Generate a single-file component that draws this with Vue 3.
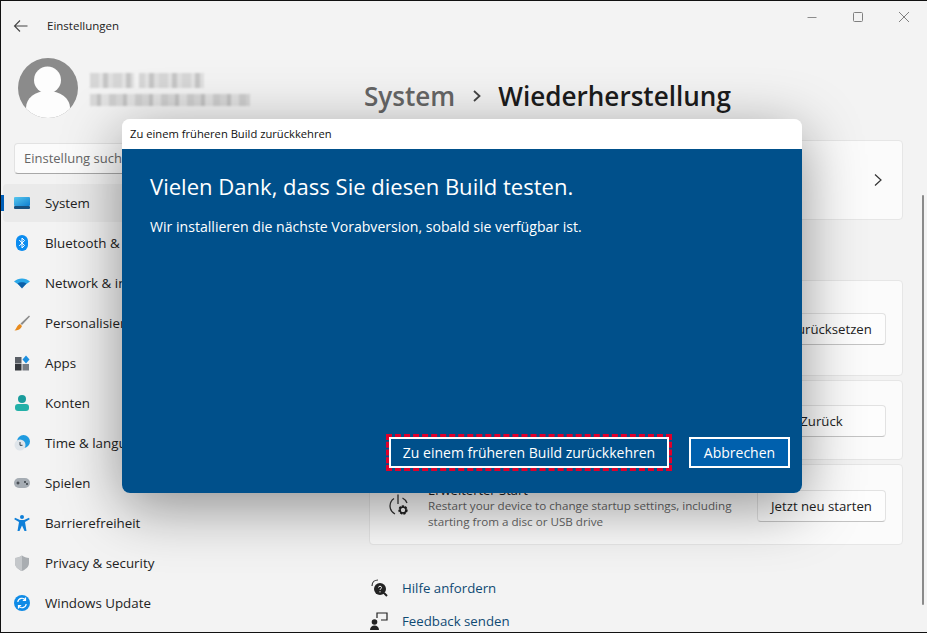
<script setup>
const navItems = [
  { id: 'system', label: 'System', active: true },
  { id: 'bt', label: 'Bluetooth & devices' },
  { id: 'net', label: 'Network & internet' },
  { id: 'brush', label: 'Personalisierung' },
  { id: 'apps', label: 'Apps' },
  { id: 'acc', label: 'Konten' },
  { id: 'time', label: 'Time & language' },
  { id: 'game', label: 'Spielen' },
  { id: 'a11y', label: 'Barrierefreiheit' },
  { id: 'shield', label: 'Privacy & security' },
  { id: 'update', label: 'Windows Update' },
]
</script>

<template>
  <div class="window">
    <aside class="sidebar">
      <div class="titlebar">
        <svg class="back" width="16" height="14" viewBox="0 0 16 14" fill="none" stroke="#444" stroke-width="1.1">
          <path d="M14.5 7H1.5M7 1.5 1.5 7 7 12.5" />
        </svg>
        <span class="apptitle">Einstellungen</span>
      </div>
      <div class="profile">
        <svg width="60" height="60" viewBox="0 0 60 60">
          <defs><clipPath id="av"><circle cx="30" cy="30" r="30" /></clipPath></defs>
          <circle cx="30" cy="30" r="30" fill="#8b8b8b" />
          <g clip-path="url(#av)">
            <circle cx="29.500" cy="22" r="13.500" fill="#fdfdfd" />
            <path d="M8 60V50C8 40 17 33 29.500 33S52 40 52 50V60Z" fill="#fdfdfd" />
          </g>
        </svg>
        <div class="identity">
          <div class="blur-name"></div>
          <div class="blur-mail"></div>
        </div>
      </div>
      <div class="search">Einstellung suchen</div>
      <nav class="nav">
        <div v-for="item in navItems" :key="item.id" class="nav-item" :class="{ active: item.active }">
          <span v-if="item.active" class="accent"></span>
          <svg class="nav-icon" width="18" height="18" viewBox="0 0 18 18">
            <template v-if="item.id === 'system'">
              <defs><linearGradient id="sys" x1="0" y1="0" x2="1" y2="1"><stop offset="0" stop-color="#57c7ee" /><stop offset="1" stop-color="#0f7fd0" /></linearGradient></defs>
              <rect x="1" y="3" width="16" height="9" rx="1" fill="url(#sys)" />
              <rect x="1" y="12" width="16" height="3" rx="1" fill="#17507f" />
            </template>
            <template v-else-if="item.id === 'bt'">
              <rect x="3" y="1" width="12" height="16" rx="6" fill="#0b8cf0" />
              <path d="M6.200 6 11.500 11.500 9 14V4L11.500 6.500 6.200 12" fill="none" stroke="#fff" stroke-width="1" />
            </template>
            <template v-else-if="item.id === 'net'">
              <path d="M1 7.500C5.500 3.500 12.500 3.500 17 7.500L9 13Z" fill="#2aa7e8" />
              <path d="M4.500 9.500C7 7.800 11 7.800 13.500 9.500L9 14.500Z" fill="#0c5fa8" />
            </template>
            <template v-else-if="item.id === 'brush'">
              <path d="M16 1.500 17 2.500 9 11 7.500 9.500Z" fill="#8a8a8a" />
              <path d="M7 10 9 12C8 15 5 16.500 1.500 16.500 3.500 15 4 11 7 10Z" fill="#e88a1c" />
            </template>
            <template v-else-if="item.id === 'apps'">
              <rect x="2" y="3" width="6.500" height="6.500" fill="#5a5f66" />
              <rect x="2" y="10" width="6.500" height="6.500" fill="#33363b" />
              <rect x="9.500" y="10" width="6.500" height="6.500" fill="#787d84" />
              <path d="M13 1.500 16.500 5.500 13 9.500 9.500 5.500Z" fill="#1b8fe0" />
            </template>
            <template v-else-if="item.id === 'acc'">
              <circle cx="9" cy="5" r="4" fill="#1a9c9c" />
              <rect x="2" y="10" width="14" height="7" rx="3" fill="#23b0a8" />
            </template>
            <template v-else-if="item.id === 'time'">
              <circle cx="10.500" cy="7.500" r="6.500" fill="#1f9be0" />
              <circle cx="7" cy="11" r="5.500" fill="#dfe5ea" />
              <path d="M7 8v3.300h2.500" fill="none" stroke="#35414d" stroke-width="1" />
            </template>
            <template v-else-if="item.id === 'game'">
              <rect x="1" y="4" width="16" height="10" rx="5" fill="#a5acb3" />
              <path d="M3.500 9h3M5 7.500v3" stroke="#2c3238" stroke-width="1" />
              <circle cx="12" cy="8" r=".9" fill="#2c3238" />
              <circle cx="14" cy="10" r=".9" fill="#2c3238" />
            </template>
            <template v-else-if="item.id === 'a11y'">
              <circle cx="9" cy="3" r="2" fill="#0f7fd8" />
              <path d="M2 3.800 7 6H11L16 3.800 16.700 5.200 12 8 13.500 17 11.500 17 9 11.500 6.500 17 4.500 17 6 8 1.300 5.200Z" fill="#0f7fd8" />
            </template>
            <template v-else-if="item.id === 'shield'">
              <path d="M9 1.500C11 3 13.500 3.800 16 4V9C16 13 12.500 15.500 9 17 5.500 15.500 2 13 2 9V4C4.500 3.800 7 3 9 1.500Z" fill="#a9adb1" />
              <path d="M9 1.500V17C5.500 15.500 2 13 2 9V4C4.500 3.800 7 3 9 1.500Z" fill="#c4c7ca" />
            </template>
            <template v-else>
              <circle cx="9" cy="9" r="8" fill="#0f8be6" />
              <path d="M4.800 8A4.300 4.300 0 0 1 12.500 6M12.500 3.500V6.300H9.800M13.200 10A4.300 4.300 0 0 1 5.500 12M5.500 14.500V11.700H8.200" fill="none" stroke="#fff" stroke-width="1.200" />
            </template>
          </svg>
          <span class="nav-label">{{ item.label }}</span>
        </div>
      </nav>
    </aside>

    <main class="main">
      <div class="controls">
        <svg width="12" height="12" viewBox="0 0 12 12" fill="none" stroke="#8c8c8c"><path d="M1.500 6.500H10.500" /></svg>
        <svg width="12" height="12" viewBox="0 0 12 12" fill="none" stroke="#808080"><rect x="1.500" y="1.500" width="9" height="9" rx="1" /></svg>
        <svg width="12" height="12" viewBox="0 0 12 12" fill="none" stroke="#808080"><path d="M1 1 11 11M11 1 1 11" /></svg>
      </div>
      <h1 class="crumbs">
        <span class="crumb-parent">System</span>
        <svg class="crumb-sep" width="12" height="14" viewBox="0 0 12 14" fill="none" stroke="#444" stroke-width="1.800"><path d="M3 2 8.500 7 3 12" /></svg>
        <span class="crumb-current">Wiederherstellung</span>
      </h1>
      <div class="content">
        <section class="card link-card">
          <svg width="10" height="14" viewBox="0 0 10 14" fill="none" stroke="#333" stroke-width="1.200"><path d="M2 1.500 8 7 2 12.500" /></svg>
        </section>
        <div class="card-stack">
          <section class="card option h96"><button class="btn">PC zurücksetzen</button></section>
          <section class="card option h80"><button class="btn">Zurück</button></section>
          <section class="card option start">
            <svg class="start-icon" width="24" height="24" viewBox="0 0 24 24" fill="none">
              <path d="M7 5.500A9 9 0 0 0 8 21M15.500 5A9 9 0 0 1 20 10M11 1.500V11" stroke="#333" stroke-width="1.300" />
              <circle cx="16" cy="17" r="3.500" fill="none" stroke="#222" stroke-width="2.400" stroke-dasharray="2 1" />
              <circle cx="16" cy="17" r="3" fill="none" stroke="#222" stroke-width="1.500" />
            </svg>
            <div class="start-text">
              <div class="start-title">Erweiterter Start</div>
              <div class="start-desc">Restart your device to change startup settings, including<br />starting from a disc or USB drive</div>
            </div>
            <button class="btn">Jetzt neu starten</button>
          </section>
        </div>
        <div class="help">
          <div class="help-row">
            <svg width="20" height="20" viewBox="0 0 20 20" fill="none">
              <path d="M3 8C3 4 6 2 9 2" stroke="#333" stroke-width="1.200" />
              <circle cx="11" cy="11" r="6" fill="#222" />
              <path d="M15 15 18 18" stroke="#222" stroke-width="2" />
              <path d="M9.500 9.500C9.500 7.800 12.500 7.800 12.500 9.500 12.500 10.800 11 10.800 11 12M11 13.200V14.400" stroke="#fff" stroke-width="1" />
            </svg>
            <span>Hilfe anfordern</span>
          </div>
          <div class="help-row">
            <svg width="20" height="20" viewBox="0 0 20 20" fill="none">
              <circle cx="5.500" cy="11" r="2.800" fill="#222" />
              <path d="M1 19C1 16 3 14.500 5.500 14.500S10 16 10 19Z" fill="#222" />
              <path d="M8 7V2H18V9H12" stroke="#222" stroke-width="1.200" />
            </svg>
            <span>Feedback senden</span>
          </div>
        </div>
      </div>
      <span class="scrollbar"></span>
    </main>

    <div class="dialog">
      <div class="dialog-title">Zu einem früheren Build zurückkehren</div>
      <div class="dialog-body">
        <h2>Vielen Dank, dass Sie diesen Build testen.</h2>
        <p>Wir installieren die nächste Vorabversion, sobald sie verfügbar ist.</p>
        <div class="dialog-actions">
          <button class="dlg-btn primary">Zu einem früheren Build zurückkehren</button>
          <button class="dlg-btn cancel">Abbrechen</button>
        </div>
      </div>
    </div>
  </div>
</template>

<style scoped>
.window {
  position: relative;
  width: 927px;
  height: 633px;
  box-sizing: border-box;
  display: flex;
  overflow: hidden;
  background: #f3f3f3;
  border-top: 1px solid #111;
  border-left: 1px solid #111;
  border-bottom: 1px solid #111;
  font-family: "Open Sans", "Noto Sans", sans-serif;
  color: #1c1c1c;
}
.sidebar {
  width: 344px;
  flex: none;
  display: flex;
  flex-direction: column;
}
.titlebar {
  height: 49px;
  display: flex;
  align-items: center;
  padding-left: 12px;
}
.back { margin-right: 18px; }
.apptitle { font-size: 11.5px; color: #222; }
.profile {
  margin: 8px 0 0 17px;
  display: flex;
  align-items: center;
  gap: 12px;
  height: 60px;
}
.identity { display: flex; flex-direction: column; gap: 6px; margin-top: 3px; }
.blur-name {
  width: 114px;
  height: 15px;
  background:
    linear-gradient(90deg, transparent 0 44px, #f3f3f3 44px 49px, transparent 49px),
    repeating-linear-gradient(90deg, #d6d6d6 0 9px, #e4e4e4 9px 13px, #c6c6c6 13px 18px, #e0e0e0 18px 23px);
  filter: blur(1.2px);
}
.blur-mail {
  width: 160px;
  height: 12px;
  background: repeating-linear-gradient(90deg, #d8d8d8 0 7px, #c2c2c2 7px 11px, #e2e2e2 11px 19px, #cecece 19px 26px);
  filter: blur(1.2px);
}
.search {
  margin: 25px 0 0 13px;
  width: 300px;
  height: 31px;
  box-sizing: border-box;
  background: #fbfbfb;
  border: 1px solid #e2e2e2;
  border-bottom-color: #a8a8a8;
  border-radius: 4px;
  padding-left: 9px;
  font-size: 13px;
  line-height: 29px;
  color: #666;
}
.nav { margin-top: 9px; display: flex; flex-direction: column; }
.nav-item {
  position: relative;
  height: 40px;
  display: flex;
  align-items: center;
  padding-left: 12px;
  font-size: 13.350px;
  color: #222;
}
.nav-item.active::before {
  content: "";
  position: absolute;
  left: 2px;
  right: 4px;
  top: 1px;
  bottom: 1px;
  background: #eaeaea;
  border-radius: 4px;
}
.accent {
  position: absolute;
  left: 0;
  top: 12px;
  width: 3px;
  height: 16px;
  background: #005fb8;
}
.nav-icon { position: relative; margin-right: 14px; flex: none; }
.nav-label { position: relative; white-space: nowrap; }
.main {
  position: relative;
  flex: 1;
  display: flex;
  flex-direction: column;
  padding-left: 19px;
}
.controls {
  position: absolute;
  top: 10px;
  right: 17px;
  display: flex;
  gap: 34px;
}
.crumbs {
  margin: 75px 0 0;
  height: 40px;
  display: flex;
  align-items: center;
  font-size: 26.100px;
  font-weight: 400;
  white-space: nowrap;
}
.crumb-sep { margin: 0 15px 0 16px; }
.crumb-parent { color: #666; font-weight: 600; }
.crumb-current { color: #1c1c1c; font-weight: 600; }
.content { margin: 24px 24px 0 5px; display: flex; flex-direction: column; }
.card {
  box-sizing: border-box;
  background: #fbfbfb;
  border: 1px solid #e6e6e6;
  border-radius: 4px;
  display: flex;
  align-items: center;
  justify-content: flex-end;
  padding-right: 16px;
}
.link-card { height: 80px; padding-right: 19px; }
.card-stack { margin-top: 60px; display: flex; flex-direction: column; gap: 4px; }
.h96, .h80 { padding-top: 2px; }
.h96 { height: 96px; }
.h80 { height: 80px; }
.start { height: 81px; justify-content: flex-start; }
.start-icon { margin-left: 17px; flex: none; }
.start-text { margin-left: 17px; flex: 1; }
.start-title { font-size: 13px; line-height: 19px; transform: translateY(2px); }
.start-desc { font-size: 11.650px; line-height: 16px; color: #666; white-space: nowrap; }
.btn {
  width: 129px;
  height: 32px;
  flex: none;
  box-sizing: border-box;
  background: #fdfdfd;
  border: 1px solid #e2e2e2;
  border-bottom-color: #c4c4c4;
  border-radius: 4px;
  padding: 0;
  font: inherit;
  font-size: 13.200px;
  color: #222;
  white-space: nowrap;
}
.start .btn { margin-top: 2px; }
.help { margin-top: 33px; display: flex; flex-direction: column; gap: 13px; font-size: 13.250px; }
.help-row {
  height: 20px;
  display: flex;
  align-items: center;
  gap: 13px;
  color: #0f4a73;
}
.scrollbar {
  position: absolute;
  right: 3px;
  top: 194px;
  width: 2px;
  height: 410px;
  background: #8a8a8a;
  border-radius: 2px;
}
.dialog {
  position: absolute;
  left: 121px;
  top: 118px;
  width: 680px;
  height: 374px;
  display: flex;
  flex-direction: column;
  border-radius: 8px;
  box-shadow: 0 14px 60px rgba(0, 0, 0, 0.42);
}
.dialog-title {
  height: 30px;
  flex: none;
  box-sizing: border-box;
  padding-left: 8px;
  background: #fff;
  border-radius: 8px 8px 0 0;
  font-size: 11.200px;
  line-height: 30px;
  color: #111;
}
.dialog-body {
  flex: 1;
  display: flex;
  flex-direction: column;
  padding: 22px 12px 25px 28px;
  background: #00508b;
  border-radius: 0 0 8px 8px;
  color: #fff;
}
.dialog-body h2 { margin: 0; font-size: 22.050px; font-weight: 400; line-height: 30px; }
.dialog-body p { margin: 16px 0 0; font-size: 14.100px; line-height: 20px; }
.dialog-actions { margin-top: auto; display: flex; justify-content: flex-end; gap: 20px; }
.dlg-btn {
  height: 31px;
  box-sizing: border-box;
  border: 2px solid #fff;
  padding: 0;
  font: inherit;
  font-size: 14px;
  color: #fff;
  white-space: nowrap;
}
.primary {
  width: 280px;
  background: #00508b;
  outline: 3px dashed #e0002a;
  outline-offset: 0;
}
.cancel { width: 101px; background: #0060ad; }
</style>
